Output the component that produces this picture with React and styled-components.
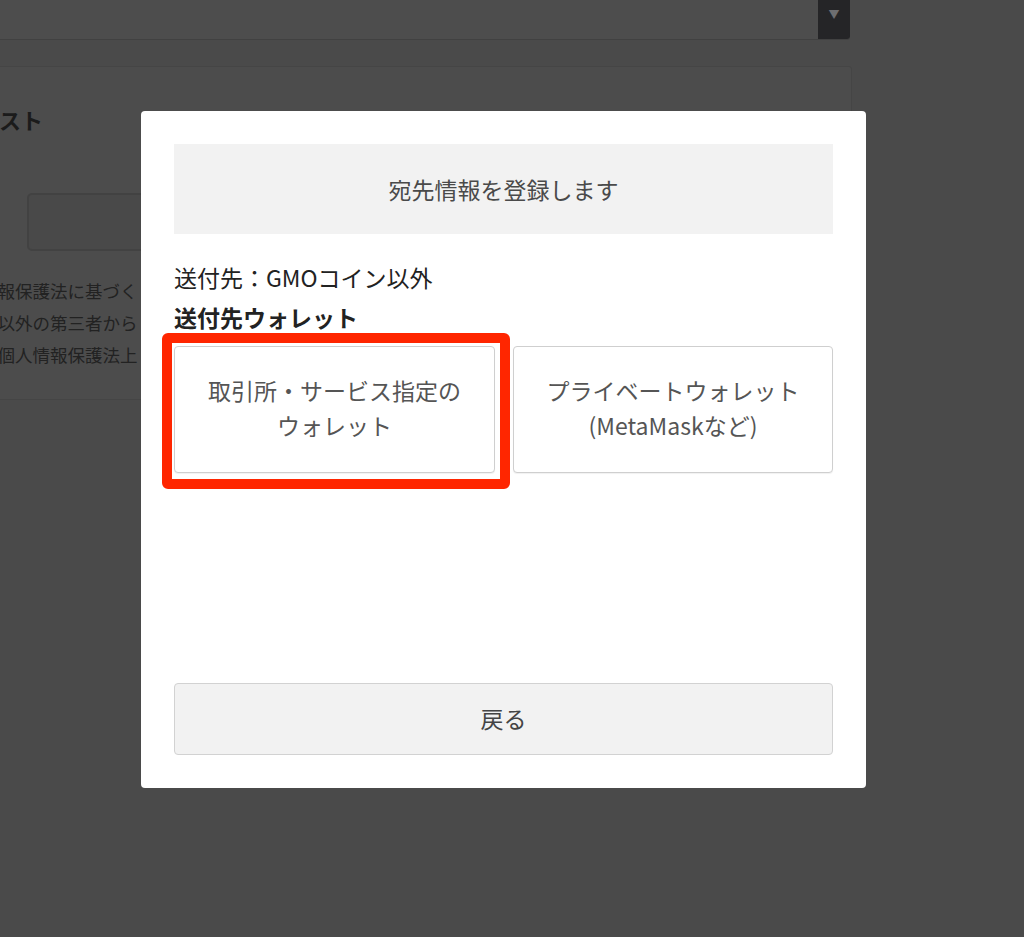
import React from "react"
import styled, { createGlobalStyle } from "styled-components"

const GlobalStyle = createGlobalStyle`
    html, body {
        margin: 0;
        padding: 0;
        background: #4a4a4a;
        overflow: hidden;
        font-family: "Noto Sans CJK JP", "Noto Sans", sans-serif;
    }
`

const Page = styled.div`
    width: 952px;
    margin-left: -100px;
    margin-top: -10px;
`

const Select = styled.div`
    height: 49px;
    margin-right: 2px;
    display: flex;
    justify-content: flex-end;
    background: #4d4d4d;
    border-bottom: 1px solid #414141;
    border-radius: 0 0 3px 0;
`

const SelectArrow = styled.div`
    width: 32px;
    display: flex;
    justify-content: center;
    align-items: flex-start;
    padding-top: 16px;
    box-sizing: border-box;
    background: #252527;
    border-radius: 0 0 3px 0;
    color: #6e6e70;
    font-size: 11px;
`

const Card = styled.section`
    margin-top: 26px;
    height: 334px;
    box-sizing: border-box;
    padding: 32px 0 0 32px;
    background: #4c4c4c;
    border: 1px solid #454545;
    border-radius: 3px;
`

const Heading = styled.h2`
    margin: 0;
    font-size: 22px;
    line-height: 40px;
    font-weight: 700;
    color: #1b1b1b;
    white-space: nowrap;
`

const InputRow = styled.div`
    margin: 54px 0 0 94px;
    height: 58px;
    width: 300px;
    box-sizing: border-box;
    border: 2px solid #424242;
    border-radius: 5px;
    background: #494949;
`

const Note = styled.p`
    margin: 24px 0 0 12px;
    font-size: 17.5px;
    line-height: 32px;
    color: #222;
    white-space: nowrap;
`

const Overlay = styled.div`
    position: fixed;
    inset: 0;
    padding: 111px 0 0 141px;
`

const Modal = styled.div`
    width: 725px;
    height: 677px;
    box-sizing: border-box;
    padding: 33px;
    background: #fff;
    border-radius: 4px;
    display: flex;
    flex-direction: column;
`

const Banner = styled.div`
    height: 90px;
    display: flex;
    align-items: center;
    justify-content: center;
    background: #f2f2f2;
    color: #4a4a4a;
    font-size: 23px;
`

const Info = styled.div`
    font-size: 23px;
    line-height: 40px;
    color: #222;
    font-weight: ${({ bold }) => (bold ? 700 : 400)};
    margin-top: ${({ bold }) => (bold ? "0" : "23px")};
`

const Choices = styled.div`
    margin-top: 9px;
    display: grid;
    grid-template-columns: 321px 320px;
    gap: 18px;
`

const Choice = styled.button`
    position: relative;
    height: 127px;
    background: #fff;
    border: 1px solid #cfcfcf;
    border-radius: 4px;
    box-shadow: 0 1px 1px rgba(0, 0, 0, 0.06);
    font-family: inherit;
    font-size: 23px;
    line-height: 35px;
    color: #555;
    padding: 0 0 3px;

    &::after {
        content: "";
        display: ${({ highlighted }) => (highlighted ? "block" : "none")};
        position: absolute;
        top: -14px;
        left: -13px;
        right: -16px;
        bottom: -17px;
        border: 10px solid #ff2600;
        border-radius: 6px;
    }
`

const BackButton = styled.button`
    margin-top: auto;
    height: 72px;
    padding: 0 0 2px;
    background: #f2f2f2;
    border: 1.5px solid #d2d2d2;
    border-radius: 4px;
    font-family: inherit;
    font-size: 23px;
    color: #444;
`

export default function App() {
    return (
        <>
            <GlobalStyle />
            <Page>
                <Select>
                    <SelectArrow>▼</SelectArrow>
                </Select>
                <Card>
                    <Heading>宛先リスト</Heading>
                    <InputRow />
                    <Note>
                        個人情報保護法に基づく<br />
                        、当社以外の第三者から<br />
                        なお、個人情報保護法上
                    </Note>
                </Card>
            </Page>
            <Overlay>
                <Modal>
                    <Banner>宛先情報を登録します</Banner>
                    <Info>送付先：GMOコイン以外</Info>
                    <Info bold>送付先ウォレット</Info>
                    <Choices>
                        <Choice highlighted>
                            取引所・サービス指定の<br />ウォレット
                        </Choice>
                        <Choice>
                            プライベートウォレット<br />(MetaMaskなど)
                        </Choice>
                    </Choices>
                    <BackButton>戻る</BackButton>
                </Modal>
            </Overlay>
        </>
    )
}
